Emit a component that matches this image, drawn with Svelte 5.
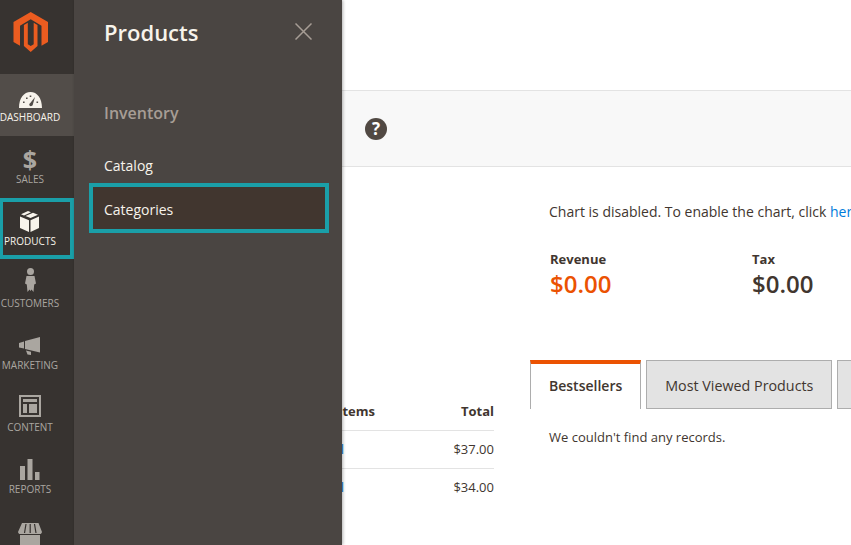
<script>
  const navItems = [
    { label: 'Dashboard', icon: 'gauge', active: true },
    { label: 'Sales', icon: 'dollar' },
    { label: 'Products', icon: 'box', selected: true },
    { label: 'Customers', icon: 'person' },
    { label: 'Marketing', icon: 'horn' },
    { label: 'Content', icon: 'layout' },
    { label: 'Reports', icon: 'bars' },
    { label: 'Stores', icon: 'shop' }
  ];

  const rows = [
    { qty: 'Sprite Stasis Ball', total: '$37.00' },
    { qty: 'Sprite Foam Roll', total: '$34.00' }
  ];
</script>

<div class="admin">
  <nav class="sidebar">
    <div class="logo">
      <svg width="36" height="40" viewBox="0 0 36 40">
        <path fill="#eb5c20" d="M17.7 0 35 10v20l-6.500 3.700V13.700L17.700 7.300 7 13.700v20L.5 30V10z" />
        <path fill="#eb5c20" d="M14.800 10.800v21.500l2.900 1.800 3-1.800V10.800l3.800 2.200v21l-6.800 6-6.800-6V13z" />
      </svg>
    </div>
    {#each navItems as item}
      <a class="nav-item" class:active={item.active} class:selected={item.selected} href="#top">
        {#if item.icon === 'dollar'}
          <span class="dollar">$</span>
        {:else}
          <svg class="nav-icon" width="24" height="24" viewBox="0 0 24 24">
            {#if item.icon === 'gauge'}
              <path fill="currentColor" fill-rule="evenodd" d="M1 23C1 13 6 7 12.500 7S24 13 24 23zM11.500 20.500c1 1.200 2.800.6 3.200-.5l2.300-8-4.700 6c-1 .5-1.300 1.700-.8 2.500zM5 16.500h1.600v1.600H5zM8 12.500h1.600v1.600H8zM11.700 10.500h1.600v1.600h-1.600zM18.500 16.500h1.600v1.600h-1.600z" />
            {:else if item.icon === 'box'}
              <path fill="currentColor" d="M10 2l3 1.200-7 3.300-3-1.300zM15 3.800l5 2-7.500 3.300-5-2zM2 7.500l9 3.700V23l-9-4zM21 7.500V19l-8.500 4V11.200z" />
            {:else if item.icon === 'person'}
              <path fill="currentColor" d="M12.500-3a3.500 3.500 0 1 1 0 7 3.500 3.500 0 0 1 0-7zM8.500 5h8l1.500 7.500-1.800 1-.7 7.500-2-2.500-1 1.500-1-1.500-2 2.500-.7-7.500-1.800-1z" />
            {:else if item.icon === 'horn'}
              <path fill="currentColor" d="M1 10l5-1.500v7L1 14.500zM7 8l15-4v15.500L7 16zM8 17.500l5 1.300v3.200l-3.500-.5z" />
            {:else if item.icon === 'layout'}
              <path fill="currentColor" fill-rule="evenodd" d="M1 0h22v22H1zM3 2v18h18V2zM5 4h14v3H5zM5 9h4v9H5zM11 9h8v9h-8z" />
            {:else if item.icon === 'bars'}
              <path fill="currentColor" d="M2 9h5v14H2zM9.500 2h5v21h-5zM17 15h4.500v8H17z" />
            {:else}
              <path fill="currentColor" d="M4 4h16.500L24 13c-.5 1.500-1 2-2 2.200V26H2V15.200C1 15 .5 14.500 0 13z" />
              <path stroke="#373330" stroke-width="1.200" fill="none" d="M8 5 6.500 14M12.200 5v9M16.500 5l1.500 9M1 15.500h22" />
            {/if}
          </svg>
        {/if}
        <span class="nav-label">{item.label}</span>
      </a>
    {/each}
  </nav>

  <main class="main">
    <header class="top"></header>
    <div class="titlebar">
      <span class="help">?</span>
    </div>

    <div class="content">
      <section class="left">
        <table>
          <thead>
            <tr><th class="name head-name">Items</th><th class="total">Total</th></tr>
          </thead>
          <tbody>
            {#each rows as row}
              <tr>
                <td class="name"><a href="#top">{row.qty}</a></td>
                <td class="total">{row.total}</td>
              </tr>
            {/each}
          </tbody>
        </table>
      </section>

      <section class="right">
        <p class="chart-note">Chart is disabled. To enable the chart, click <a href="#top">here</a>.</p>
        <div class="totals">
          <div class="stat revenue">
            <span class="stat-label">Revenue</span>
            <strong class="stat-value">$0.00</strong>
          </div>
          <div class="stat">
            <span class="stat-label">Tax</span>
            <strong class="stat-value">$0.00</strong>
          </div>
        </div>
        <div class="tabs">
          <button class="tab current">Bestsellers</button>
          <button class="tab">Most Viewed Products</button>
          <button class="tab">New Customers</button>
        </div>
        <p class="empty">We couldn't find any records.</p>
      </section>
    </div>

    <aside class="flyout">
      <div class="flyout-head">
        <h2>Products</h2>
        <svg class="close" width="17" height="17" viewBox="0 0 17 17">
          <path d="M.5.5l16 16M16.500.5l-16 16" stroke="#a79d95" stroke-width="1.500" fill="none" />
        </svg>
      </div>
      <h3>Inventory</h3>
      <a class="sub-link" href="#top">Catalog</a>
      <a class="sub-link selected" href="#top">Categories</a>
    </aside>
  </main>
</div>

<style>
  :global(body) {
    margin: 0;
    overflow: hidden;
  }

  .admin {
    display: flex;
    width: 851px;
    height: 545px;
    overflow: hidden;
    font-family: "Open Sans", sans-serif;
    color: #41362f;
    background: #fff;
  }

  .sidebar {
    flex: 0 0 74px;
    background: #373330;
    overflow: hidden;
  }

  .logo {
    height: 74px;
    box-sizing: border-box;
    padding: 12px 0 0 12.5px;
  }

  .logo svg {
    display: block;
  }

  .nav-item {
    display: flex;
    flex-direction: column;
    align-items: center;
    box-sizing: border-box;
    width: 74px;
    height: 62px;
    padding: 11px 14px 0 0;
    color: #aaa6a0;
    text-decoration: none;
  }

  .nav-item.active {
    background: #524d49;
    color: #f7f3eb;
  }

  .nav-item.selected {
    height: 61px;
    margin-bottom: 1px;
    border: 4px solid #1a9fa8;
    border-left-width: 3px;
    padding: 7px 13px 0 0;
    color: #f7f3eb;
  }

  .nav-icon {
    flex: none;
    overflow: visible;
  }

  .dollar {
    height: 24px;
    font-size: 25px;
    font-weight: 700;
    line-height: 24px;
  }

  .nav-label {
    font-size: 10px;
    line-height: 14px;
    margin-top: 1px;
    text-transform: uppercase;
    white-space: nowrap;
  }

  .main {
    position: relative;
    flex: 1;
    min-width: 0;
  }

  .top {
    height: 90px;
    border-bottom: 1px solid #e3e3e3;
  }

  .titlebar {
    height: 75px;
    background: #f8f8f8;
    border-bottom: 1px solid #e3e3e3;
    display: flex;
    align-items: center;
    padding-left: 291px;
  }

  .help {
    width: 22px;
    height: 22px;
    border-radius: 50%;
    background: #514943;
    color: #fff;
    font-size: 17px;
    font-weight: 700;
    line-height: 22px;
    text-align: center;
  }

  .content {
    display: grid;
    grid-template-columns: 420px 1fr;
    column-gap: 36px;
    font-size: 14px;
  }

  .left {
    padding-top: 225px;
  }

  table {
    width: 100%;
    border-collapse: collapse;
    font-size: 13px;
  }

  th {
    font-weight: 700;
    height: 38px;
    padding: 0;
    border-bottom: 1px solid #e3e3e3;
  }

  td {
    height: 38px;
    padding: 0 0 2px;
    box-sizing: border-box;
    border-bottom: 1px solid #e3e3e3;
  }

  tbody tr:last-child td {
    border-bottom: 0;
  }

  .name {
    text-align: right;
    padding-right: 50px;
    white-space: nowrap;
  }

  .head-name {
    padding-right: 19px;
  }

  .name a {
    color: #007bdb;
    text-decoration: none;
  }

  .total {
    text-align: right;
    width: 100px;
  }

  .right {
    padding-left: 19px;
    min-width: 0;
  }

  .chart-note {
    margin: 35px 0 0;
    line-height: 20px;
    white-space: nowrap;
  }

  .chart-note a {
    color: #007bdb;
    text-decoration: none;
  }

  .totals {
    display: flex;
    margin-top: 28px;
  }

  .stat {
    flex: none;
    box-sizing: border-box;
    width: 202px;
    padding-left: 1px;
    display: flex;
    flex-direction: column;
  }

  .stat-label {
    font-size: 13px;
    font-weight: 700;
    line-height: 18px;
  }

  .stat-value {
    font-size: 24px;
    font-weight: 600;
    line-height: 30px;
    padding-top: 1px;
  }

  .revenue .stat-value {
    color: #eb5202;
  }

  .tabs {
    display: flex;
    gap: 5px;
    margin: 61px 0 0 -19px;
    height: 49px;
    width: 500px;
  }

  .tab {
    flex: none;
    box-sizing: border-box;
    height: 49px;
    padding: 2px 18px 0;
    background: #e3e3e3;
    border: 1px solid #adadad;
    font: 14.3px "Open Sans", sans-serif;
    color: #41362f;
  }

  .tab.current {
    background: #fff;
    border-top: 4px solid #eb5202;
    border-bottom: 0;
    padding: 0 18px 2px;
    font-size: 14px;
    font-weight: 600;
  }

  .empty {
    margin: 18px 0 0;
    font-size: 13px;
    line-height: 20px;
  }

  .flyout {
    position: absolute;
    left: 0;
    top: 0;
    bottom: 0;
    width: 268px;
    box-sizing: border-box;
    padding: 0 13px 0 15px;
    background: #4a4542;
    box-shadow: 1px 0 3px rgba(0, 0, 0, 0.3);
    display: flex;
    flex-direction: column;
  }

  .flyout-head {
    display: flex;
    justify-content: space-between;
    align-items: center;
    height: 63px;
    padding: 0 17px 0 15px;
  }

  h2 {
    margin: 0;
    font-size: 22px;
    font-weight: 600;
    color: #f7f3eb;
  }

  h3 {
    margin: 38px 0 21px 15px;
    font-size: 16px;
    line-height: 24px;
    font-weight: 600;
    color: #a79d95;
  }

  .sub-link {
    display: flex;
    align-items: center;
    flex: none;
    box-sizing: border-box;
    height: 38px;
    padding-left: 15px;
    font-size: 14px;
    color: #f7f3eb;
    text-decoration: none;
  }

  .sub-link.selected {
    height: 50px;
    margin-top: -1px;
    border: 4px solid #1a9fa8;
    padding: 2px 0 0 11px;
    background: #41362f;
  }
</style>
